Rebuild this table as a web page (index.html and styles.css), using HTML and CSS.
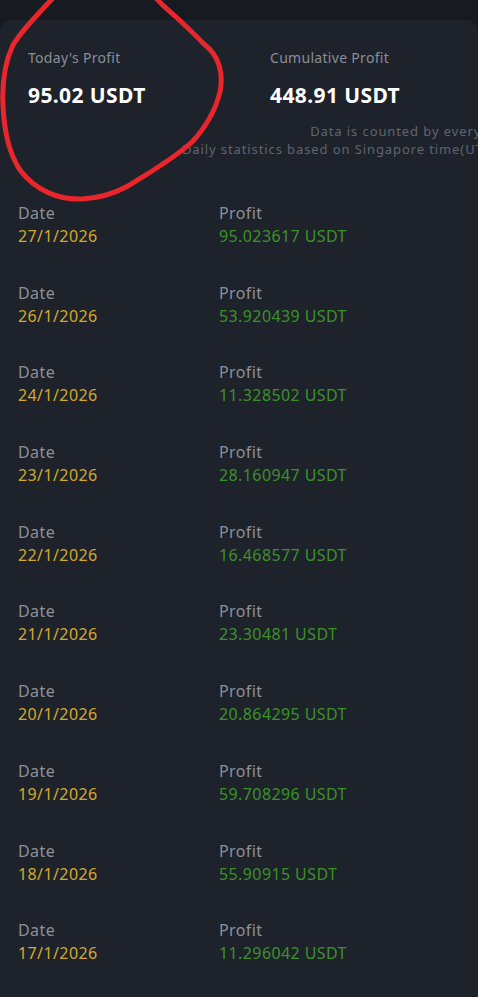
FILE: index.html
```html
<!DOCTYPE html>
<html lang="en">
<head>
    <meta charset="UTF-8">
    <meta name="viewport" content="width=device-width, initial-scale=1.0">
    <title>Profit Records</title>
    <link rel="stylesheet" href="styles.css">
</head>
<body>
    <div class="topbar"></div>
    <div class="card">
        <div class="summary">
            <div class="summary-item">
                <div class="summary-label">Today's Profit</div>
                <div class="summary-value">95.02 USDT</div>
            </div>
            <div class="summary-item">
                <div class="summary-label">Cumulative Profit</div>
                <div class="summary-value">448.91 USDT</div>
            </div>
        </div>
        <div class="note">
            <div>Data is counted by every day.</div>
            <div>Daily statistics based on Singapore time(UTC+8)</div>
        </div>
        <div class="records">
            <div class="record">
                <div><div class="rec-label">Date</div><div class="rec-date">27/1/2026</div></div>
                <div><div class="rec-label">Profit</div><div class="rec-profit">95.023617 USDT</div></div>
            </div>
            <div class="record">
                <div><div class="rec-label">Date</div><div class="rec-date">26/1/2026</div></div>
                <div><div class="rec-label">Profit</div><div class="rec-profit">53.920439 USDT</div></div>
            </div>
            <div class="record">
                <div><div class="rec-label">Date</div><div class="rec-date">24/1/2026</div></div>
                <div><div class="rec-label">Profit</div><div class="rec-profit">11.328502 USDT</div></div>
            </div>
            <div class="record">
                <div><div class="rec-label">Date</div><div class="rec-date">23/1/2026</div></div>
                <div><div class="rec-label">Profit</div><div class="rec-profit">28.160947 USDT</div></div>
            </div>
            <div class="record">
                <div><div class="rec-label">Date</div><div class="rec-date">22/1/2026</div></div>
                <div><div class="rec-label">Profit</div><div class="rec-profit">16.468577 USDT</div></div>
            </div>
            <div class="record">
                <div><div class="rec-label">Date</div><div class="rec-date">21/1/2026</div></div>
                <div><div class="rec-label">Profit</div><div class="rec-profit">23.30481 USDT</div></div>
            </div>
            <div class="record">
                <div><div class="rec-label">Date</div><div class="rec-date">20/1/2026</div></div>
                <div><div class="rec-label">Profit</div><div class="rec-profit">20.864295 USDT</div></div>
            </div>
            <div class="record">
                <div><div class="rec-label">Date</div><div class="rec-date">19/1/2026</div></div>
                <div><div class="rec-label">Profit</div><div class="rec-profit">59.708296 USDT</div></div>
            </div>
            <div class="record">
                <div><div class="rec-label">Date</div><div class="rec-date">18/1/2026</div></div>
                <div><div class="rec-label">Profit</div><div class="rec-profit">55.90915 USDT</div></div>
            </div>
            <div class="record">
                <div><div class="rec-label">Date</div><div class="rec-date">17/1/2026</div></div>
                <div><div class="rec-label">Profit</div><div class="rec-profit">11.296042 USDT</div></div>
            </div>
        </div>
    </div>

    <!-- hand-drawn red mark over the screenshot -->
    <svg class="scribble" width="240" height="210" viewBox="0 0 240 210">
        <path d="M53 -2 C38 14 22 30 13 45 C5 62 2 85 3 105 C4 130 8 152 20 170 C35 190 58 200 82 199 C100 198 115 193 128 186 C150 172 172 160 192 142 C205 128 215 112 220 92 C224 72 218 55 205 45 C195 35 185 25 175 16 C168 10 162 5 156 -2"
              fill="none" stroke="#e8262b" stroke-width="5" stroke-linecap="round"/>
    </svg>
</body>
</html>
```

FILE: styles.css
```css
body {
    margin: 0;
    background-color: #171a21;
    font-family: "Noto Sans", "Open Sans", sans-serif;
    overflow: hidden;
    position: relative;
}
.topbar {
    height: 20px;
}
.card {
    background-color: #1e222b;
    border-radius: 12px 12px 0 0;
    padding-top: 29px;
    min-height: 977px;
    box-sizing: border-box;
}
.summary {
    display: grid;
    grid-template-columns: 242px 1fr;
    padding-left: 28px;
}
.summary-label {
    font-size: 14px;
    line-height: 18px;
    letter-spacing: 0.3px;
    color: #8a8e97;
}
.summary-value {
    margin-top: 15px;
    font-size: 21px;
    line-height: 26px;
    letter-spacing: 0.4px;
    font-weight: bold;
    color: #ffffff;
}
.note {
    width: 514px;
    margin-top: 14px;
    text-align: right;
    white-space: nowrap;
    font-size: 13px;
    line-height: 18px;
    letter-spacing: 0.9px;
    color: #5f6570;
}
.records {
    display: flex;
    flex-direction: column;
    gap: 33.7px;
    margin-top: 44px;
    padding-left: 18px;
}
.record {
    display: grid;
    grid-template-columns: 201px 1fr;
}
.rec-label,
.rec-date,
.rec-profit {
    font-size: 16px;
    line-height: 23px;
    letter-spacing: 0.4px;
}
.rec-label {
    color: #8c9099;
}
.rec-date {
    color: #d4a82c;
}
.rec-profit {
    color: #3b9227;
}
.scribble {
    position: absolute;
    left: 0;
    top: 0;
}
```
